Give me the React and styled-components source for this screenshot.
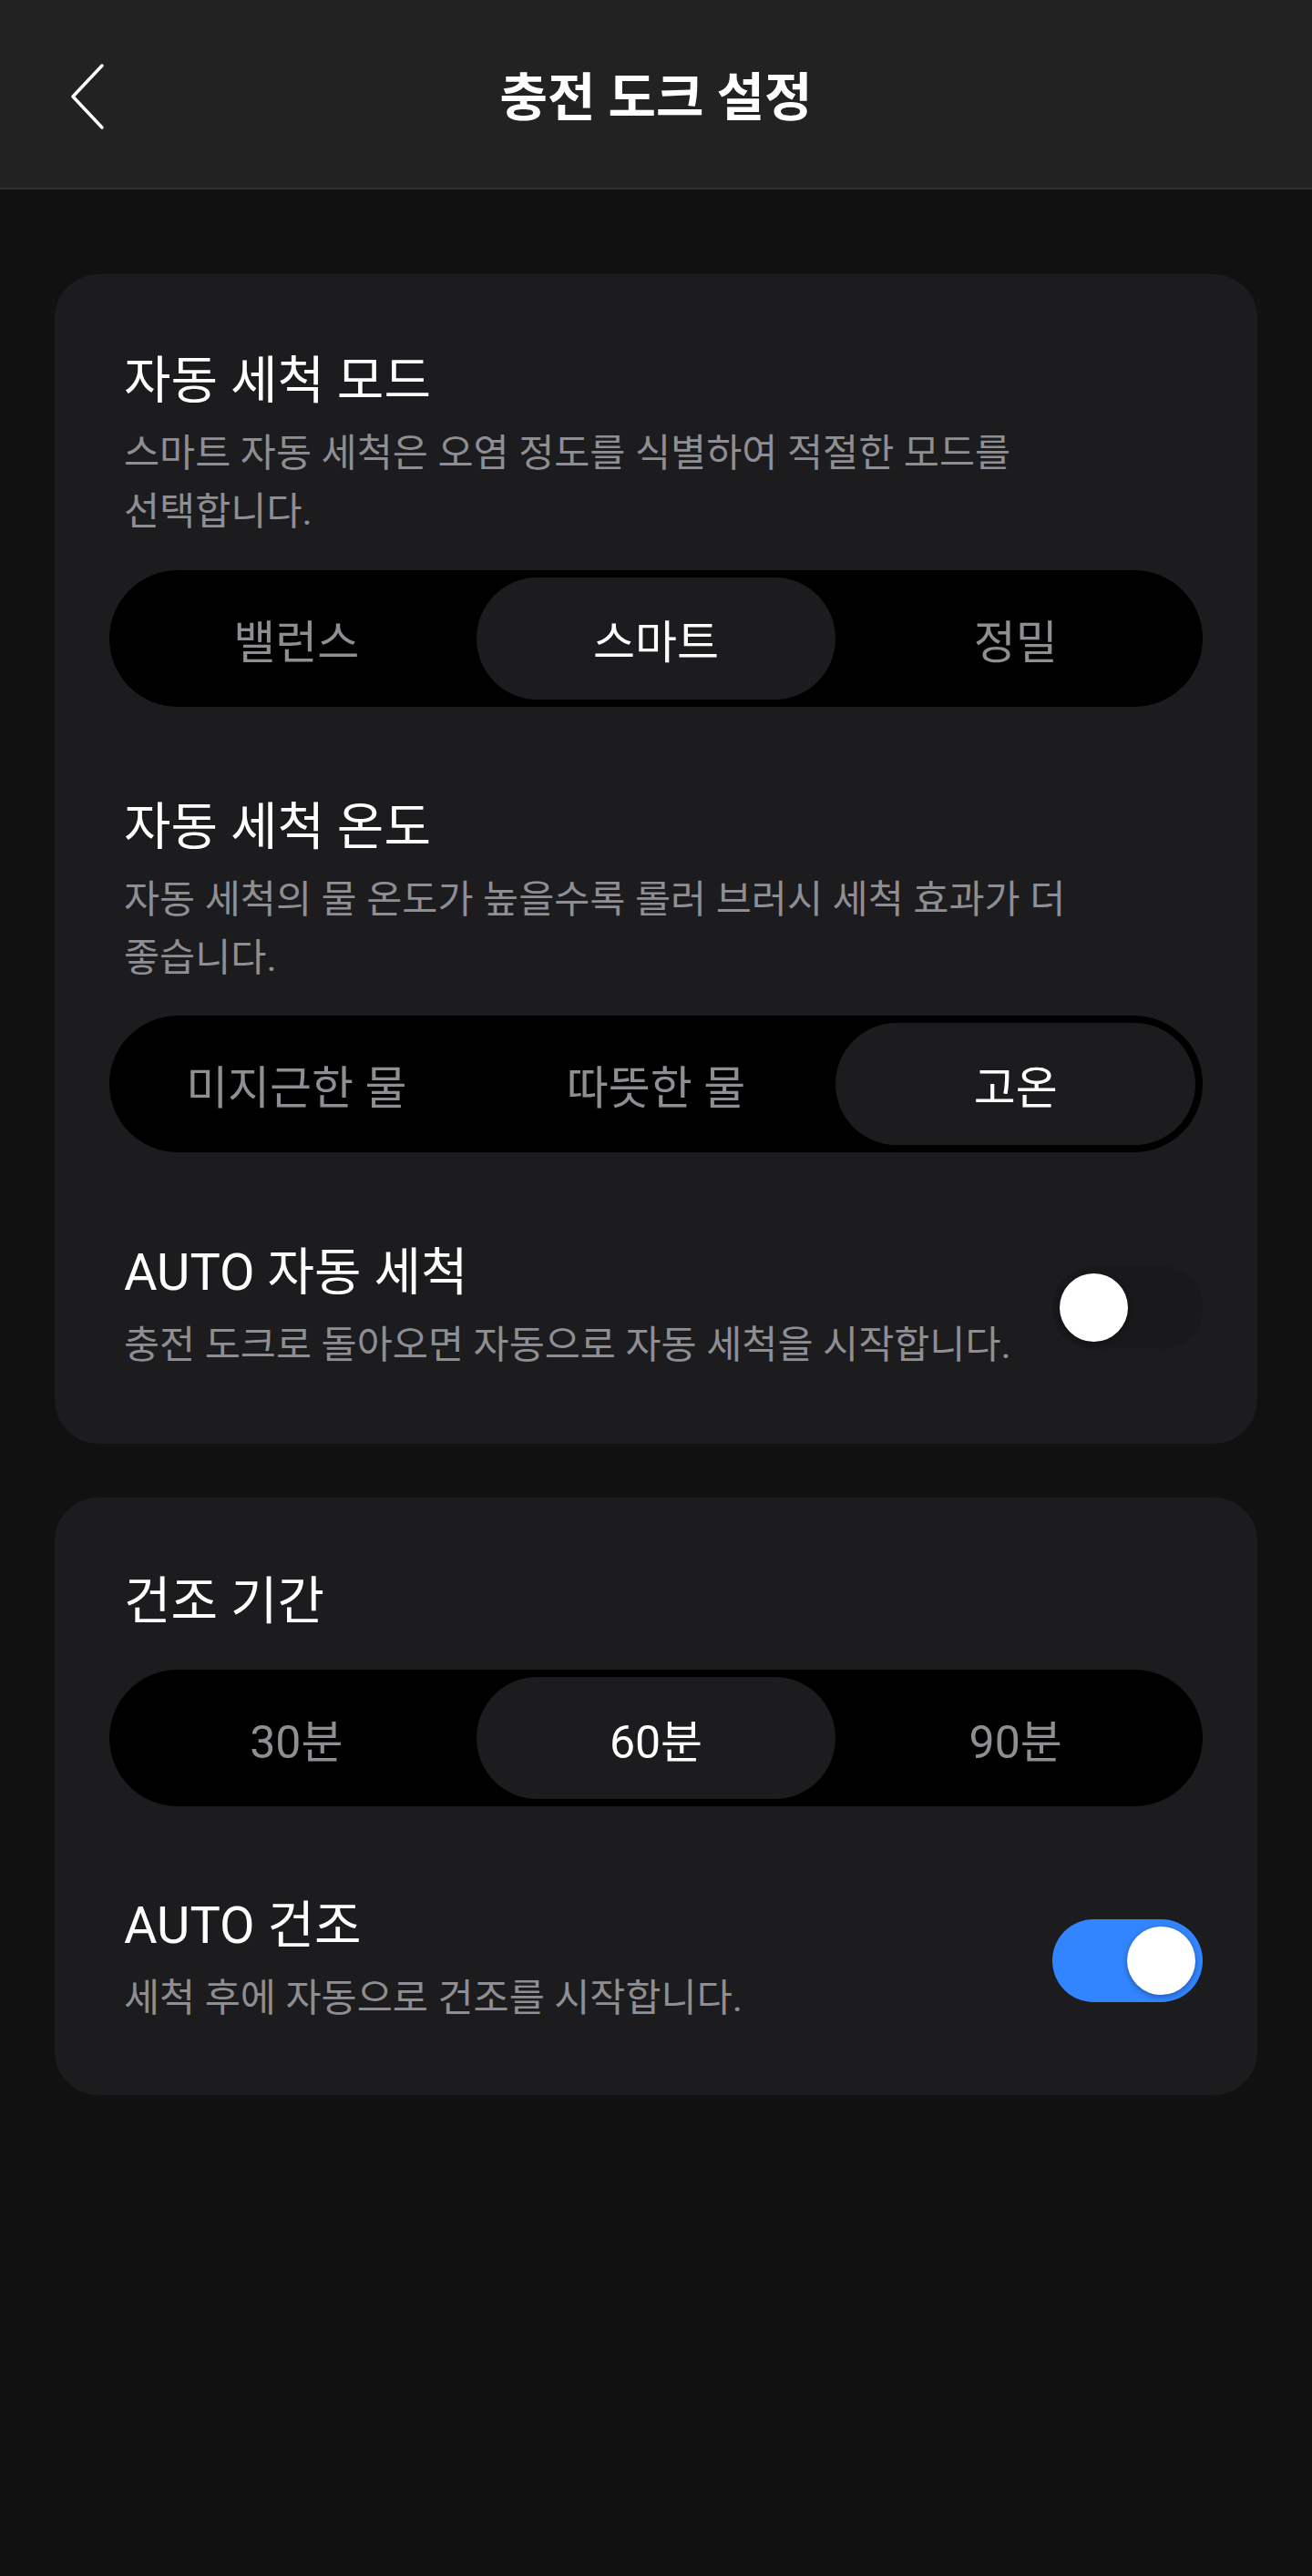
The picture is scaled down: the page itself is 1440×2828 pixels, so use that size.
import { useState } from 'react'
import styled, { createGlobalStyle } from 'styled-components'

const GlobalStyle = createGlobalStyle`
  * {
    box-sizing: border-box;
  }
  body {
    margin: 0;
    background: #111111;
    font-family: Roboto, 'Noto Sans CJK KR', sans-serif;
    color: #ffffff;
  }
`

const Page = styled.div`
  min-height: 2828px;
  background: #111111;
`

const Header = styled.header`
  height: 208px;
  background: #222222;
  border-bottom: 2px solid #303030;
  display: flex;
  align-items: center;
  justify-content: center;
  position: relative;
`

const BackButton = styled.button`
  position: absolute;
  left: 70px;
  top: 64px;
  width: 52px;
  height: 84px;
  padding: 0;
  border: none;
  background: transparent;
  cursor: pointer;
  display: flex;
  align-items: center;
  justify-content: center;
`

const HeaderTitle = styled.h1`
  margin: -2px 0 0;
  font-size: 57px;
  font-weight: 700;
`

const Content = styled.main`
  padding: 93px 60px;
  display: flex;
  flex-direction: column;
  gap: 59px;
`

const Card = styled.section`
  background: #1c1c1e;
  border-radius: 48px;
  padding: ${(p) => p.$pt || 80}px 60px ${(p) => p.$pb || 76}px;
  display: flex;
  flex-direction: column;
`

const Block = styled.div`
  margin-top: ${(p) => p.$mt || 0}px;
`

const TextCol = styled.div`
  padding: 0 16px;
  flex: 1;
  min-width: 0;
`

const Title = styled.h2`
  margin: 0;
  font-size: 56px;
  font-weight: 400;
  line-height: 72px;
`

const Desc = styled.p`
  margin: 12px 0 0;
  max-width: 1080px;
  font-size: 42.5px;
  line-height: 64px;
  color: #8e8e93;
  word-break: keep-all;
`

const Segmented = styled.div`
  margin-top: ${(p) => p.$mt}px;
  height: 150px;
  border-radius: 75px;
  background: #000000;
  padding: 8px;
  display: grid;
  grid-template-columns: repeat(3, 1fr);
`

const SegButton = styled.button`
  border: none;
  border-radius: 67px;
  background: ${(p) => (p.$active ? '#1c1c1e' : 'transparent')};
  color: ${(p) => (p.$active ? '#ffffff' : '#8e8e93')};
  font-family: Roboto, 'Noto Sans CJK KR', sans-serif;
  font-size: 50px;
  cursor: pointer;
  padding: 0;
`

const ToggleRow = styled.div`
  margin-top: ${(p) => p.$mt}px;
  display: flex;
  align-items: center;
  gap: 24px;
`

const Track = styled.button`
  flex: none;
  width: 165px;
  height: 91px;
  border-radius: 46px;
  border: none;
  padding: 8px;
  background: ${(p) => (p.$on ? '#3385ff' : '#19191b')};
  display: flex;
  justify-content: ${(p) => (p.$on ? 'flex-end' : 'flex-start')};
  cursor: pointer;
`

const Knob = styled.span`
  width: 75px;
  height: 75px;
  border-radius: 50%;
  background: #ffffff;
  box-shadow: 0 2px 6px rgba(0, 0, 0, 0.35);
`

const Chevron = () => (
  <svg width="40" height="74" viewBox="0 0 40 74" fill="none">
    <path
      d="M36 3 L4 37 L36 71"
      stroke="#ffffff"
      strokeWidth="3.5"
      strokeLinecap="round"
      strokeLinejoin="round"
    />
  </svg>
)

const SegmentGroup = ({ options, value, onChange, mt }) => (
  <Segmented $mt={mt}>
    {options.map((opt) => (
      <SegButton
        key={opt}
        $active={opt === value}
        onClick={() => onChange(opt)}
      >
        {opt}
      </SegButton>
    ))}
  </Segmented>
)

const Toggle = ({ on, onChange }) => (
  <Track $on={on} onClick={() => onChange(!on)}>
    <Knob />
  </Track>
)

const App = () => {
  const [mode, setMode] = useState('스마트')
  const [temp, setTemp] = useState('고온')
  const [autoWash, setAutoWash] = useState(false)
  const [dryTime, setDryTime] = useState('60분')
  const [autoDry, setAutoDry] = useState(true)

  return (
    <Page>
      <GlobalStyle />
      <Header>
        <BackButton aria-label='뒤로'>
          <Chevron />
        </BackButton>
        <HeaderTitle>충전 도크 설정</HeaderTitle>
      </Header>

      <Content>
        <Card $pt={81} $pb={76}>
          <Block>
            <TextCol>
              <Title>자동 세척 모드</Title>
              <Desc>
                스마트 자동 세척은 오염 정도를 식별하여 적절한 모드를
                선택합니다.
              </Desc>
            </TextCol>
            <SegmentGroup
              options={['밸런스', '스마트', '정밀']}
              value={mode}
              onChange={setMode}
              mt={32}
            />
          </Block>

          <Block $mt={96}>
            <TextCol>
              <Title>자동 세척 온도</Title>
              <Desc>
                자동 세척의 물 온도가 높을수록 롤러 브러시 세척 효과가 더
                좋습니다.
              </Desc>
            </TextCol>
            <SegmentGroup
              options={['미지근한 물', '따뜻한 물', '고온']}
              value={temp}
              onChange={setTemp}
              mt={31}
            />
          </Block>

          <ToggleRow $mt={96}>
            <TextCol>
              <Title>AUTO 자동 세척</Title>
              <Desc>충전 도크로 돌아오면 자동으로 자동 세척을 시작합니다.</Desc>
            </TextCol>
            <Toggle on={autoWash} onChange={setAutoWash} />
          </ToggleRow>
        </Card>

        <Card $pt={78} $pb={74}>
          <Block>
            <TextCol>
              <Title>건조 기간</Title>
            </TextCol>
            <SegmentGroup
              options={['30분', '60분', '90분']}
              value={dryTime}
              onChange={setDryTime}
              mt={39}
            />
          </Block>

          <ToggleRow $mt={95}>
            <TextCol>
              <Title>AUTO 건조</Title>
              <Desc>세척 후에 자동으로 건조를 시작합니다.</Desc>
            </TextCol>
            <Toggle on={autoDry} onChange={setAutoDry} />
          </ToggleRow>
        </Card>
      </Content>
    </Page>
  )
}

export default App
